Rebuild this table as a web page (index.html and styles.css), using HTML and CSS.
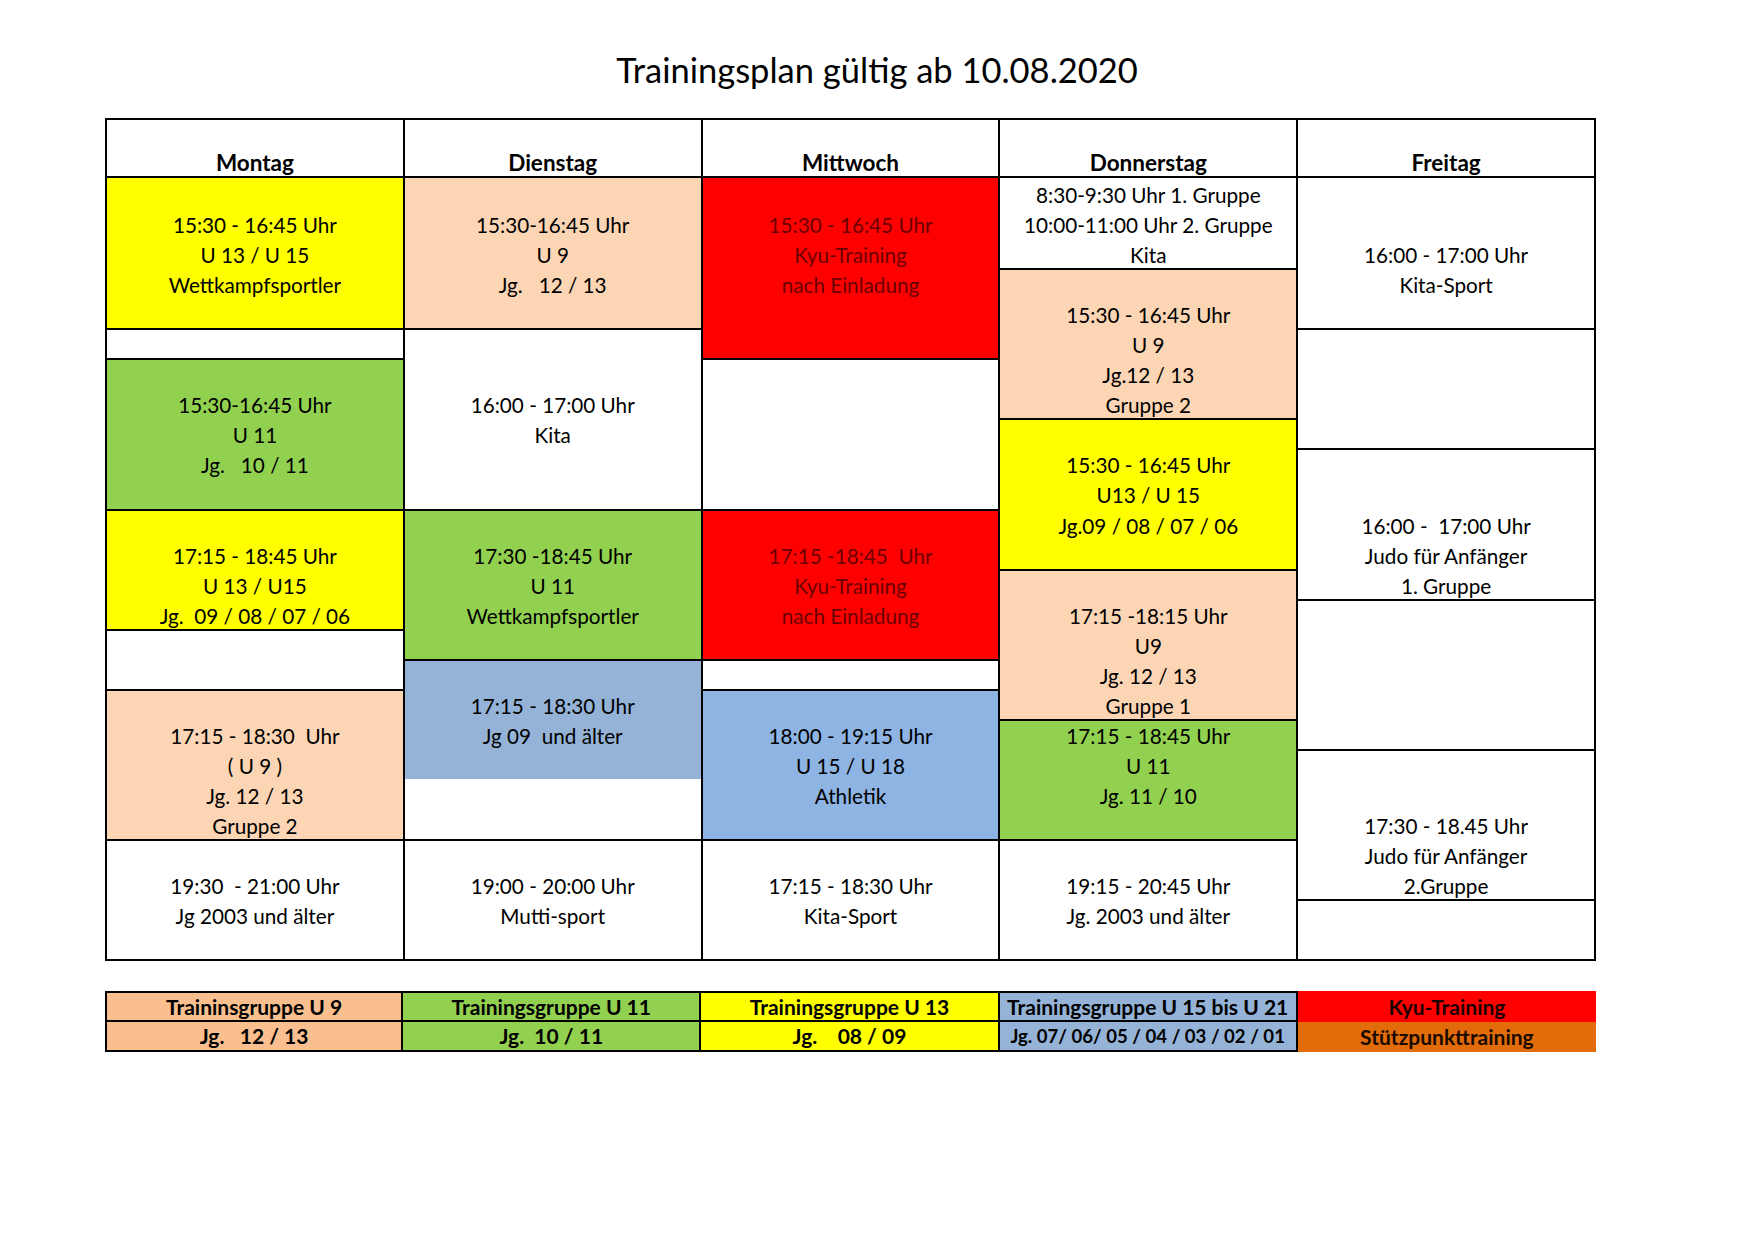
FILE: index.html
```html
<!DOCTYPE html>
<html lang="de">
<head>
<meta charset="utf-8">
<title>Trainingsplan</title>
<link rel="stylesheet" href="styles.css">
</head>
<body>
<div class="page">
  <h1 class="title">Trainingsplan gültig ab 10.08.2020</h1>

  <div class="plan">
    <div class="day">
      <div class="head">Montag</div>
      <div class="cell h5 yellow"><span>15:30 - 16:45 Uhr</span><span>U 13 / U 15</span><span>Wettkampfsportler</span></div>
      <div class="cell h1"></div>
      <div class="cell h5 green"><span>15:30-16:45 Uhr</span><span>U 11</span><span>Jg.   10 / 11</span></div>
      <div class="cell h4 yellow"><span>17:15 - 18:45 Uhr</span><span>U 13 / U15</span><span>Jg.  09 / 08 / 07 / 06</span></div>
      <div class="cell h2"></div>
      <div class="cell h5 peach"><span>17:15 - 18:30  Uhr</span><span>( U 9 )</span><span>Jg. 12 / 13</span><span>Gruppe 2</span></div>
      <div class="cell h4"><span>19:30  - 21:00 Uhr</span><span>Jg 2003 und älter</span></div>
    </div>

    <div class="day">
      <div class="head">Dienstag</div>
      <div class="cell h5 peach"><span>15:30-16:45 Uhr</span><span>U 9</span><span>Jg.   12 / 13</span></div>
      <div class="cell h6 off2"><span>16:00 - 17:00 Uhr</span><span>Kita</span></div>
      <div class="cell h5 green"><span>17:30 -18:45 Uhr</span><span>U 11</span><span>Wettkampfsportler</span></div>
      <div class="cell h4 blue-grey"><span>17:15 - 18:30 Uhr</span><span>Jg 09  und älter</span></div>
      <div class="cell h2 cont"></div>
      <div class="cell h4"><span>19:00 - 20:00 Uhr</span><span>Mutti-sport</span></div>
    </div>

    <div class="day">
      <div class="head">Mittwoch</div>
      <div class="cell h6 red"><span>15:30 - 16:45 Uhr</span><span>Kyu-Training</span><span>nach Einladung</span></div>
      <div class="cell h5"></div>
      <div class="cell h5 red"><span>17:15 -18:45  Uhr</span><span>Kyu-Training</span><span>nach Einladung</span></div>
      <div class="cell h1"></div>
      <div class="cell h5 blue"><span>18:00 - 19:15 Uhr</span><span>U 15 / U 18</span><span>Athletik</span></div>
      <div class="cell h4"><span>17:15 - 18:30 Uhr</span><span>Kita-Sport</span></div>
    </div>

    <div class="day">
      <div class="head">Donnerstag</div>
      <div class="cell h3 off0"><span>8:30-9:30 Uhr 1. Gruppe</span><span>10:00-11:00 Uhr 2. Gruppe</span><span>Kita</span></div>
      <div class="cell h5 peach"><span>15:30 - 16:45 Uhr</span><span>U 9</span><span>Jg.12 / 13</span><span>Gruppe 2</span></div>
      <div class="cell h5 yellow"><span>15:30 - 16:45 Uhr</span><span>U13 / U 15</span><span>Jg.09 / 08 / 07 / 06</span></div>
      <div class="cell h5 peach"><span>17:15 -18:15 Uhr</span><span>U9</span><span>Jg. 12 / 13</span><span>Gruppe 1</span></div>
      <div class="cell h4 green off0"><span>17:15 - 18:45 Uhr</span><span>U 11</span><span>Jg. 11 / 10</span></div>
      <div class="cell h4"><span>19:15 - 20:45 Uhr</span><span>Jg. 2003 und älter</span></div>
    </div>

    <div class="day">
      <div class="head">Freitag</div>
      <div class="cell h5 off2"><span>16:00 - 17:00 Uhr</span><span>Kita-Sport</span></div>
      <div class="cell h4"></div>
      <div class="cell h5 off2"><span>16:00 -  17:00 Uhr</span><span>Judo für Anfänger</span><span>1. Gruppe</span></div>
      <div class="cell h5"></div>
      <div class="cell h5 off2"><span>17:30 - 18.45 Uhr</span><span>Judo für Anfänger</span><span>2.Gruppe</span></div>
      <div class="cell h2"></div>
    </div>
  </div>

  <div class="legend">
    <div class="key first l-peach">Traininsgruppe U 9</div>
    <div class="key l-green">Trainingsgruppe U 11</div>
    <div class="key l-yellow">Trainingsgruppe U 13</div>
    <div class="key l-blue">Trainingsgruppe U 15 bis U 21</div>
    <div class="key plain l-red">Kyu-Training</div>
    <div class="key first l-peach">Jg.   12 / 13</div>
    <div class="key l-green">Jg.  10 / 11</div>
    <div class="key l-yellow">Jg.    08 / 09</div>
    <div class="key l-blue small">Jg. 07/ 06/ 05 / 04 / 03 / 02 / 01</div>
    <div class="key plain l-orange">Stützpunkttraining</div>
  </div>
</div>
</body>
</html>
```

FILE: styles.css
```css
:root {
  --row: 30.05px;
  --line: 2px solid #000;
}

* {
  box-sizing: border-box;
}

html, body {
  margin: 0;
  padding: 0;
  background: #fff;
}

body {
  font-family: Lato, "Open Sans", "Liberation Sans", sans-serif;
  color: #000;
}

.page {
  width: 1754px;
  padding-top: 50px;
}

.title {
  margin: 0;
  font-size: 34.5px;
  line-height: 40px;
  font-weight: 400;
  text-align: center;
}

/* ---------- schedule ---------- */

.plan {
  margin: 28px 0 0 105px;
  width: 1491px;
  display: grid;
  grid-template-columns: repeat(5, 1fr);
  border-top: var(--line);
  border-left: var(--line);
  border-bottom: var(--line);
}

.day {
  display: flex;
  flex-direction: column;
}

.head {
  flex: none;
  height: 58px;
  border-right: var(--line);
  border-bottom: var(--line);
  display: flex;
  align-items: flex-end;
  justify-content: center;
  font-weight: 700;
  font-size: 22.5px;
  line-height: 26px;
}

.cell {
  flex: none;
  min-height: 0;
  border-top: var(--line);
  border-right: var(--line);
  background: #fff;
  display: flex;
  flex-direction: column;
  align-items: center;
  font-size: 20.7px;
  line-height: var(--row);
}

/* the first slot under the header and a continued slot have no line on top */
.head + .cell,
.cell.cont {
  border-top: 0;
  padding-top: 2px;
}

.cell span {
  flex: none;
  display: block;
  white-space: pre;
  height: var(--row);
}

.cell span:first-child {
  margin-top: var(--row);
}

.cell.off0 span:first-child { margin-top: 0; }
.cell.off2 span:first-child { margin-top: calc(var(--row) * 2); }

.h1 { height: calc(var(--row) * 1); }
.h2 { height: calc(var(--row) * 2); }
.h3 { height: calc(var(--row) * 3); }
.h4 { height: calc(var(--row) * 4); }
.h5 { height: calc(var(--row) * 5); }
.h6 { height: calc(var(--row) * 6); }

.yellow    { background: #ffff00; }
.peach     { background: #fcd5b4; }
.green     { background: #92d050; }
.blue      { background: #8db4e2; }
.blue-grey { background: #95b3d7; }
.red       { background: #ff0000; color: #6b0000; }

/* ---------- legend ---------- */

.legend {
  margin: 30px 0 0 105px;
  width: 1491px;
  display: grid;
  grid-template-columns: repeat(5, 1fr);
  grid-template-rows: 31px 30px;
}

.key {
  display: flex;
  align-items: center;
  justify-content: center;
  font-weight: 700;
  font-size: 21px;
  line-height: 26px;
  white-space: pre;
  border-right: var(--line);
  border-bottom: var(--line);
}

.legend .key:nth-child(-n+4) {
  border-top: var(--line);
}

.key.first {
  border-left: var(--line);
}

.key.plain {
  border: 0;
}

.key.small {
  font-size: 18.6px;
}

.l-peach  { background: #fabf8f; }
.l-green  { background: #92d050; }
.l-yellow { background: #ffff00; }
.l-blue   { background: #95b3d7; }
.l-red    { background: #ff0000; color: #1a0000; }
.l-orange { background: #e26b0a; color: #1a0a00; }
```
